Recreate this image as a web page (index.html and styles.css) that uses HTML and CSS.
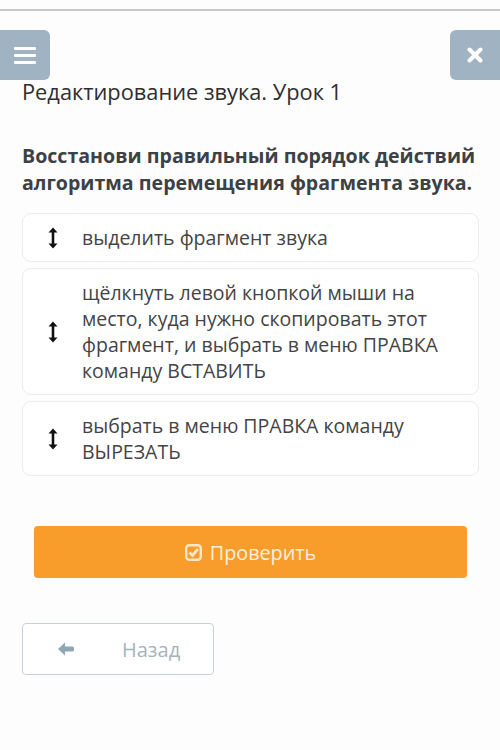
FILE: index.html
```html
<!DOCTYPE html>
<html lang="ru">
<head>
  <meta charset="UTF-8" />
  <meta name="viewport" content="width=device-width, initial-scale=1.0"/>
  <title>Редактирование звука. Урок 1</title>
  <link rel="stylesheet" href="styles.css">
</head>
<body>
  <div class="topline"></div>

  <div class="toolbar">
    <button class="square-btn" aria-label="Меню">
      <svg width="22" height="18" viewBox="0 0 22 18">
        <rect x="0" y="1" width="22" height="3" rx="1" fill="#fff"/>
        <rect x="0" y="8" width="22" height="3" rx="1" fill="#fff"/>
        <rect x="0" y="15" width="22" height="3" rx="1" fill="#fff"/>
      </svg>
    </button>
    <button class="square-btn" aria-label="Закрыть">
      <svg width="16" height="16" viewBox="0 0 16 16">
        <path d="M2.5 2.5 L13.5 13.5 M13.5 2.5 L2.5 13.5" stroke="#fff" stroke-width="4" stroke-linecap="round"/>
      </svg>
    </button>
  </div>

  <div class="container">
    <h1 class="lesson">Редактирование звука. Урок 1</h1>
    <h2 class="question">Восстанови правильный порядок действий алгоритма перемещения фрагмента звука.</h2>

    <ul class="order-list">
      <li class="order-item">
        <span class="handle">
          <svg width="10" height="22" viewBox="0 0 10 22">
            <path d="M5 3 V19" stroke="#111" stroke-width="2.6"/>
            <path d="M0.5 5.5 L5 0.5 L9.5 5.5 Z M0.5 16.5 L5 21.5 L9.5 16.5 Z" fill="#111"/>
          </svg>
        </span>
        <span class="item-text">выделить фрагмент звука</span>
      </li>
      <li class="order-item">
        <span class="handle">
          <svg width="10" height="22" viewBox="0 0 10 22">
            <path d="M5 3 V19" stroke="#111" stroke-width="2.6"/>
            <path d="M0.5 5.5 L5 0.5 L9.5 5.5 Z M0.5 16.5 L5 21.5 L9.5 16.5 Z" fill="#111"/>
          </svg>
        </span>
        <span class="item-text">щёлкнуть левой кнопкой мыши на место, куда нужно скопировать этот фрагмент, и выбрать в меню ПРАВКА команду ВСТАВИТЬ</span>
      </li>
      <li class="order-item">
        <span class="handle">
          <svg width="10" height="22" viewBox="0 0 10 22">
            <path d="M5 3 V19" stroke="#111" stroke-width="2.6"/>
            <path d="M0.5 5.5 L5 0.5 L9.5 5.5 Z M0.5 16.5 L5 21.5 L9.5 16.5 Z" fill="#111"/>
          </svg>
        </span>
        <span class="item-text">выбрать в меню ПРАВКА команду ВЫРЕЗАТЬ</span>
      </li>
    </ul>

    <div class="check-wrap">
      <button class="check-btn">
        <svg width="17" height="17" viewBox="0 0 17 17">
          <rect x="1.2" y="1.2" width="14.6" height="14.6" rx="3" fill="none" stroke="#fbe6c6" stroke-width="2.4"/>
          <path d="M4.5 8.5 L7.5 11.5 L13 5" fill="none" stroke="#fbe6c6" stroke-width="2.8"/>
        </svg>
        Проверить
      </button>
    </div>

    <button class="back-btn">
      <svg width="18" height="14" viewBox="0 0 18 14">
        <path d="M8 0.5 L1 7 L8 13.5 Z" fill="#8ea7b6"/>
        <rect x="6" y="4.5" width="11" height="5" rx="1.5" fill="#8ea7b6"/>
      </svg>
      <span>Назад</span>
    </button>
  </div>
</body>
</html>
```

FILE: styles.css
```css
:root {
  --slate: #9fb3c3;
  --orange: #f89d2c;
  --text: #3d3d3d;
}

body {
  margin: 0;
  font-family: "Open Sans", "Noto Sans", sans-serif;
  background: #fdfdfd;
  color: var(--text);
}

.topline {
  height: 9px;
  border-bottom: 2px solid #c8c8c8;
}

.toolbar {
  display: flex;
  justify-content: space-between;
  margin-top: 19px;
}

.square-btn {
  width: 50px;
  height: 50px;
  border: none;
  background: var(--slate);
  display: flex;
  align-items: center;
  justify-content: center;
  padding: 0;
}
.toolbar .square-btn:first-child {
  border-radius: 0 6px 6px 0;
}
.toolbar .square-btn:last-child {
  border-radius: 6px 0 0 6px;
}

.container {
  padding: 0 21px 0 22px;
}

.lesson {
  margin: 0;
  font-size: 21.8px;
  font-weight: 400;
  line-height: 26px;
  color: #2e2e2e;
  margin-top: -1px;
}

.question {
  margin: 37px 0 17px;
  font-size: 19.6px;
  font-weight: 700;
  line-height: 27px;
  color: #3c4146;
}

.order-list {
  list-style: none;
  margin: 0;
  padding: 0;
  display: flex;
  flex-direction: column;
  gap: 6px;
}
.order-item {
  display: flex;
  align-items: center;
  border: 1px solid #ececec;
  border-radius: 9px;
  background: #fff;
  padding: 11px 34px 10px 0;
  min-height: 26px;
}
.handle {
  width: 58px;
  flex-shrink: 0;
  display: flex;
  justify-content: center;
  padding-left: 1px;
}
.item-text {
  font-size: 19.5px;
  line-height: 26px;
  color: #444;
}

.check-wrap {
  padding: 50px 12px 0;
}
.check-btn {
  width: 100%;
  height: 52px;
  border: none;
  border-radius: 4px;
  background: var(--orange);
  color: #fdf1dd;
  font-family: inherit;
  font-size: 19.8px;
  display: flex;
  align-items: center;
  justify-content: center;
  gap: 8px;
}

.back-btn {
  margin-top: 45px;
  width: 192px;
  height: 52px;
  border: 1px solid #c9d0d5;
  border-radius: 4px;
  background: #fff;
  font-family: inherit;
  font-size: 20px;
  color: #a4b3bd;
  display: flex;
  align-items: center;
  padding: 0 0 0 34px;
  gap: 47px;
}
```
